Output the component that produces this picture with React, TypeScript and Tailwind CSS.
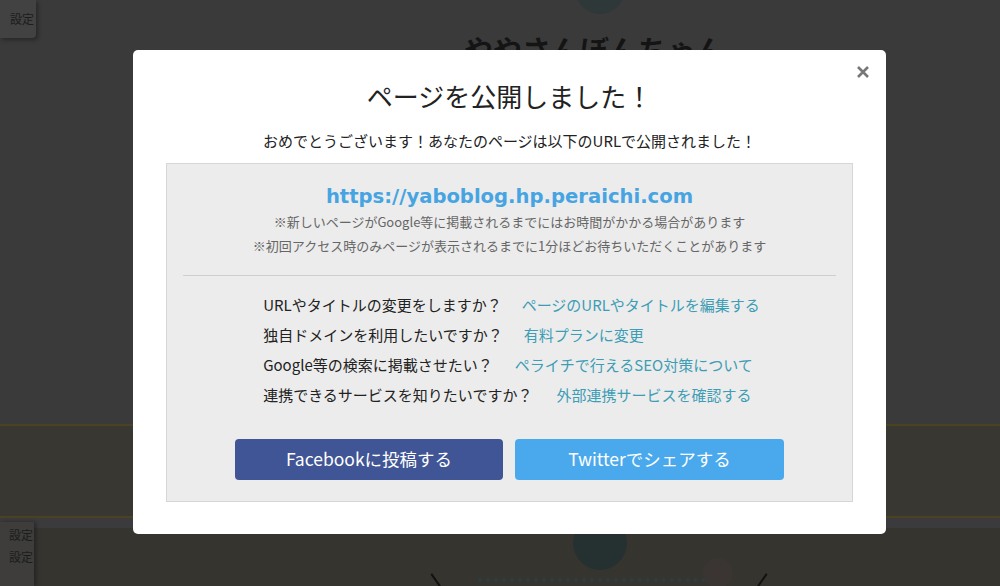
import React from "react";

const jp = { fontFamily: '"Noto Sans CJK JP", "Noto Sans", sans-serif' };

export default function App() {
  const rows: [string, string, string][] = [
    ["URLやタイトルの変更をしますか？", "ページのURLやタイトルを編集する", "gap-[20px]"],
    ["独自ドメインを利用したいですか？", "有料プランに変更", "gap-[21px]"],
    ["Google等の検索に掲載させたい？", "ペライチで行えるSEO対策について", "gap-[22px]"],
    ["連携できるサービスを知りたいですか？", "外部連携サービスを確認する", "gap-[24px]"],
  ];
  return (
    <div className="relative w-[1000px] h-[586px] overflow-hidden bg-[#3a3a3b]" style={jp}>
      {/* background page */}
      <div className="flex flex-col h-full">
        <div className="relative h-[424px]">
          <div className="w-[36px] h-[38px] bg-[#424242] rounded-br-[4px] shadow-[2px_2px_4px_rgba(0,0,0,0.35)] flex items-center justify-end pr-[2px] text-[12px] text-[#1c1c1c]">
            設定
          </div>
          <div className="absolute left-[575px] top-[-36px] w-[50px] h-[50px] rounded-full bg-[#2e3839]" />
          <div className="absolute left-[464px] top-[28px] text-[29px] font-bold text-[#141414]">
            ややさんぼんちゃん
          </div>
        </div>
        <div className="h-[94px] bg-[#393731] border-y-[2px] border-[#4b4221]" />
        <div className="h-[10px] bg-[#3b3b3d]" />
        <div className="relative flex-1 bg-[#36342f]">
          <div className="absolute left-0 top-[-6px] w-[34px] h-[64px] bg-[#3e3d3b] shadow-[2px_0_4px_rgba(0,0,0,0.35)] flex flex-col items-end pr-[1px] pt-[4px] gap-[4px] text-[12px] text-[#1c1c1c]">
            <span>設定</span>
            <span>設定</span>
          </div>
          <div className="absolute left-[573px] top-[-12px] w-[54px] h-[54px] rounded-full bg-[#253131]" />
          <div className="absolute left-[436px] top-[44px] w-[2px] h-[20px] bg-[#111] rotate-[-35deg]" />
          <div className="absolute left-[760px] top-[44px] w-[2px] h-[20px] bg-[#111] rotate-[35deg]" />
          <div className="absolute left-[478px] top-[50px] w-[236px] border-t-[4px] border-dotted border-[#2c3e44]" />
          <div className="absolute left-[703px] top-[30px] w-[30px] h-[30px] rounded-full bg-[#3a3532]" />
        </div>
      </div>

      {/* modal */}
      <div className="absolute left-[133px] top-[50px] w-[753px] h-[484px] bg-white rounded-[5px] flex flex-col items-center px-[33px] pt-[28px]">
        <button className="absolute left-[723px] top-[15px] w-[14px] h-[14px]">
          <svg viewBox="0 0 14 14" width="14" height="14">
            <path d="M2 2 L12 12 M12 2 L2 12" stroke="#777" strokeWidth="2.6" strokeLinecap="butt" />
          </svg>
        </button>
        <h1 className="text-[26px] leading-[36px] text-[#222]">ページを公開しました！</h1>
        <p className="mt-[17px] text-[15px] leading-[20px] text-[#222]">
          おめでとうございます！あなたのページは以下のURLで公開されました！
        </p>
        <div className="mt-[12px] w-full bg-[#ececec] border border-[#d6d6d6] flex flex-col items-center px-[16px] pt-[20px] pb-[21px]">
          <div
            className="text-[19.6px] leading-[26px] font-bold text-[#47a4e2]"
            style={{ fontFamily: '"DejaVu Sans", "Noto Sans CJK JP", sans-serif' }}
          >
            https://yaboblog.hp.peraichi.com
          </div>
          <div className="text-[13px] leading-[24px] text-[#666]">
            ※新しいページがGoogle等に掲載されるまでにはお時間がかかる場合があります
          </div>
          <div className="text-[13px] leading-[24px] text-[#666]">
            ※初回アクセス時のみページが表示されるまでに1分ほどお待ちいただくことがあります
          </div>
          <div className="mt-[17px] w-full h-px bg-[#cfcfcf]" />
          <div className="mt-[14px] ml-[4px] flex flex-col">
            {rows.map(([q, l, g]) => (
              <div key={q} className={`flex ${g} text-[15px] leading-[30px]`}>
                <span className="text-[#222]">{q}</span>
                <a className="text-[#3d9db5]">{l}</a>
              </div>
            ))}
          </div>
          <div className="mt-[29px] flex gap-[12px]">
            <button className="w-[268px] h-[41px] rounded-[4px] bg-[#405595] text-white text-[17.5px]">
              Facebookに投稿する
            </button>
            <button className="w-[269px] h-[41px] rounded-[4px] bg-[#4aa9ec] text-white text-[17.5px]">
              Twitterでシェアする
            </button>
          </div>
        </div>
      </div>
    </div>
  );
}
